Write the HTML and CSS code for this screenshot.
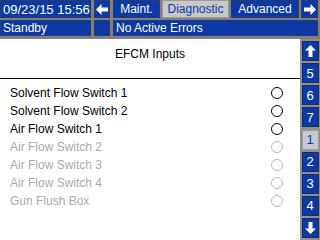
FILE: index.html
```html
<!DOCTYPE html>
<html lang="en">
<head>
  <meta charset="UTF-8">
  <title>EFCM Inputs</title>
  <link rel="stylesheet" href="styles.css">
</head>
<body>
  <div class="screen">
    <!-- Header bars -->
    <div class="header">
      <div class="box date">09/23/15 15:56</div>
      <div class="box nav">
        <svg width="12" height="11" viewBox="0 0 12 11"><path d="M0 5.5 L5.5 0 L5.5 3.5 L12 3.5 L12 7.5 L5.5 7.5 L5.5 11 Z" fill="#fff"/></svg>
      </div>
      <div class="tabs">
        <div class="box tab">Maint.</div>
        <div class="box tab active">Diagnostic</div>
        <div class="box tab">Advanced</div>
        <div class="box nav">
          <svg width="12" height="11" viewBox="0 0 12 11"><path d="M12 5.5 L6.5 0 L6.5 3.5 L0 3.5 L0 7.5 L6.5 7.5 L6.5 11 Z" fill="#fff"/></svg>
        </div>
      </div>
      <div class="box status">Standby</div>
      <div class="box blank"></div>
      <div class="box errors">No Active Errors</div>
    </div>

    <div class="body">
      <div class="panel">
        <div class="title">EFCM Inputs</div>
        <ul class="inputs">
          <li>Solvent Flow Switch 1<span class="led"></span></li>
          <li>Solvent Flow Switch 2<span class="led"></span></li>
          <li>Air Flow Switch 1<span class="led"></span></li>
          <li class="off">Air Flow Switch 2<span class="led"></span></li>
          <li class="off">Air Flow Switch 3<span class="led"></span></li>
          <li class="off">Air Flow Switch 4<span class="led"></span></li>
          <li class="off">Gun Flush Box<span class="led"></span></li>
        </ul>
      </div>

      <div class="pager">
        <div class="pg">
          <svg width="11" height="12" viewBox="0 0 11 12"><path d="M5.5 0 L11 5.5 L7.5 5.5 L7.5 12 L3.5 12 L3.5 5.5 L0 5.5 Z" fill="#fff"/></svg>
        </div>
        <div class="pg">5</div>
        <div class="pg">6</div>
        <div class="pg">7</div>
        <div class="pg current">1</div>
        <div class="pg">2</div>
        <div class="pg">3</div>
        <div class="pg">4</div>
        <div class="pg">
          <svg width="11" height="12" viewBox="0 0 11 12"><path d="M5.5 12 L11 6.5 L7.5 6.5 L7.5 0 L3.5 0 L3.5 6.5 L0 6.5 Z" fill="#fff"/></svg>
        </div>
      </div>
    </div>
  </div>
</body>
</html>
```

FILE: styles.css
```css
/* Display styles */
body {
  margin: 0;
  font-family: "Liberation Sans", Arial, sans-serif;
  font-size: 12px;
  background-color: #808080;
}

.screen {
  width: 320px;
  height: 240px;
  display: flex;
  flex-direction: column;
  overflow: hidden;
}

.header {
  display: grid;
  grid-template-columns: 91px 16px 1fr;
  grid-template-rows: 18px 16px;
  column-gap: 3px;
  row-gap: 2px;
  padding-right: 2px;
  margin-bottom: 3px;
}

.box {
  background-color: #0b3aa6;
  color: #fff;
  border: 1px solid #2a3a70;
  display: flex;
  align-items: center;
  box-sizing: border-box;
  line-height: 1;
}

.date {
  font-size: 13px;
  padding-left: 2px;
}

.nav {
  justify-content: center;
}

.tabs {
  display: flex;
  gap: 2px;
}

.tab {
  justify-content: center;
}

.tabs .tab:nth-child(1) {
  width: 47px;
}

.tabs .tab:nth-child(2) {
  width: 67px;
}

.tabs .tab:nth-child(3) {
  width: 68px;
}

.tabs .nav {
  flex: 1;
}

.tab.active {
  background-color: #c8c8c8;
  color: #0b3aa6;
  border-color: #9a9a9a;
}

.status,
.errors {
  padding-left: 2px;
}

.body {
  flex: 1;
  display: flex;
}

.panel {
  width: 300px;
  background-color: #fff;
}

.title {
  height: 40px;
  border-bottom: 1px solid #000;
  display: flex;
  justify-content: center;
  padding-top: 8px;
  box-sizing: border-box;
  color: #000;
}

.inputs {
  list-style: none;
  margin: 0;
  padding: 5px 17px 0 10px;
}

.inputs li {
  height: 18px;
  display: flex;
  align-items: center;
  justify-content: space-between;
  color: #000;
}

.led {
  width: 12px;
  height: 12px;
  border: 1px solid #000;
  border-radius: 50%;
  box-sizing: border-box;
}

.inputs li.off {
  color: #aaa;
}

.inputs li.off .led {
  border-color: #b8b8b8;
}

.pager {
  flex: 1;
  display: flex;
  flex-direction: column;
  justify-content: space-between;
  align-items: center;
  padding: 2px 0;
  background-color: #909090;
}

.pg {
  width: 15px;
  height: 18px;
  background-color: #0b3aa6;
  color: #fff;
  border: 1px solid #1c2a58;
  font-size: 13px;
  display: flex;
  align-items: center;
  justify-content: center;
}

.pg.current {
  background-color: #c8c8d0;
  color: #0b3aa6;
  border-color: #9a9a9a;
}
```
